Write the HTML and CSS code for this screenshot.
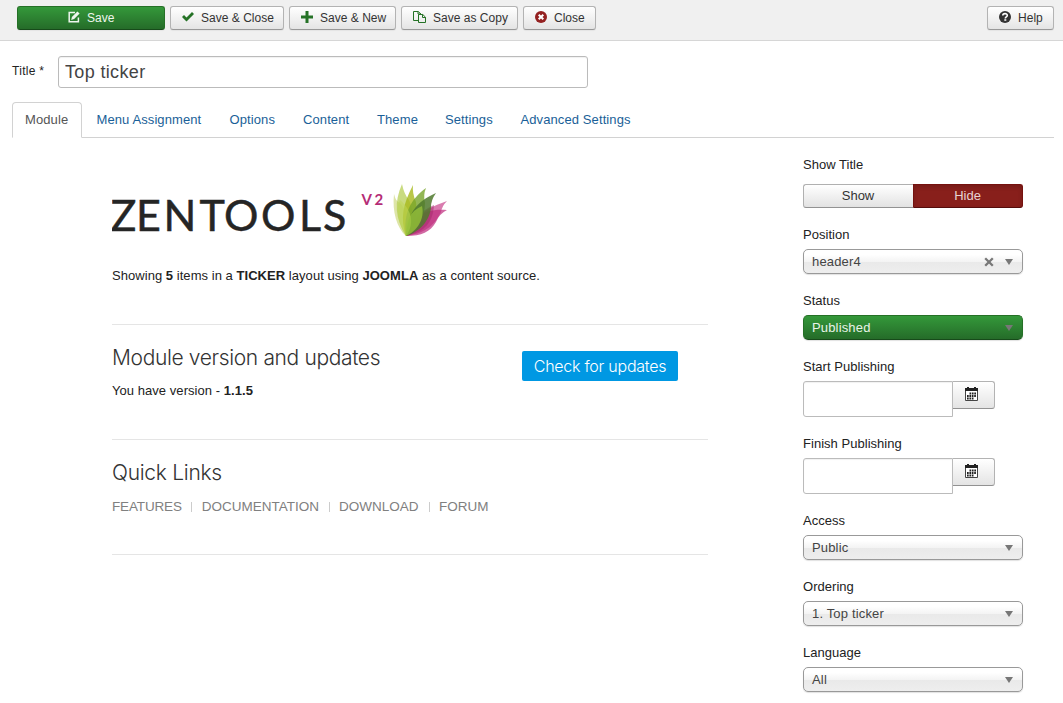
FILE: index.html
```html
<!DOCTYPE html>
<html lang="en">
<head>
<meta charset="utf-8">
<title>Module: Top ticker</title>
<link rel="stylesheet" href="styles.css">
</head>
<body>
<header class="toolbar">
  <button class="btn btn-save"><svg class="icon" viewBox="0 0 12 12"><path d="M7 1.6H1.2v9.2h9.2V6.4" fill="none" stroke="currentColor" stroke-width="1.5"/><path d="M3.2 8.9l.7-3L9.4.4l2.2 2.2-5.5 5.5z" fill="currentColor"/></svg><span>Save</span></button>
  <button class="btn btn-close-save"><svg class="icon green" viewBox="0 0 12 12"><path d="M0 6l2-2 2.5 2.5L10 1l2 2-7.5 7.6z" fill="currentColor"/></svg><span>Save &amp; Close</span></button>
  <button class="btn btn-new"><svg class="icon green" viewBox="0 0 12 12"><path d="M4.5 0h3v4.5H12v3H7.500V12h-3V7.500H0v-3h4.500z" fill="currentColor"/></svg><span>Save &amp; New</span></button>
  <button class="btn btn-copy"><svg class="icon copy-icon green" viewBox="0 0 13 12"><path d="M5 9.500H.5V.5h4.700L8 3M5 .5V3h3M5.500 3.500h4.300l2.700 2.700v5.300h-7zM9.500 3.500v3h3" fill="none" stroke="currentColor"/></svg><span>Save as Copy</span></button>
  <button class="btn btn-cancel"><svg class="icon red" viewBox="0 0 12 12"><circle cx="6" cy="6" r="6" fill="currentColor"/><path d="M3.700 3.700l4.600 4.600M8.300 3.700L3.700 8.300" stroke="#fff" stroke-width="2"/></svg><span>Close</span></button>
  <button class="btn btn-help"><svg class="icon" viewBox="0 0 12 12"><circle cx="6" cy="6" r="6" fill="currentColor"/><path d="M3.800 4.600C3.800 2 8.300 2.100 8.300 4.400c0 1.500-2 1.400-2 3M5.300 9h2" fill="none" stroke="#fff" stroke-width="1.600"/></svg><span>Help</span></button>
</header>

<div class="title-row">
  <label class="title-label" for="title">Title *</label>
  <input class="title-input" id="title" type="text" value="Top ticker">
</div>

<nav class="tabs">
  <a class="tab active">Module</a>
  <a class="tab tab-menu">Menu Assignment</a>
  <a class="tab tab-options">Options</a>
  <a class="tab tab-content">Content</a>
  <a class="tab tab-theme">Theme</a>
  <a class="tab tab-settings">Settings</a>
  <a class="tab tab-advanced">Advanced Settings</a>
</nav>

<div class="columns">
  <main class="main">
    <svg class="logo" viewBox="112 182 340 60" role="img" aria-label="Zentools V2">
      <text class="logo-name" y="230.500" x="110.500 136 163.500 199.500 224 261 299 323">ZENTOOLS</text>
      <text class="logo-version" y="205" x="361.500 374.500">V2</text>
      <g>
        <path d="M406 236C411 222 418 211 447 201Q442 206 441 212C435 224 427 233 406 236Z" fill="#cf5b9b" opacity=".8"/>
        <path d="M406 236C414 216 425 208 447 210Q439 214 436 222C430 232 422 236 406 236Z" fill="#bd2a7c" opacity=".7"/>
        <path d="M406 236C410 218 420 212 434 205C433 222 425 232 406 236Z" fill="#a52b6d" opacity=".55"/>
        <path d="M406 236C397 228 392 212 394 194Q396 202 400 203C410 215 412 226 406 236Z" fill="#d5df91" opacity=".8"/>
        <path d="M406 236C395 218 394 202 402 184Q404 194 409 200C415 213 413 226 406 236Z" fill="#b7cf55" opacity=".75"/>
        <path d="M406 236C400 218 403 204 413 185Q412 193 416 202C418 217 413 228 406 236Z" fill="#a8b91c" opacity=".8"/>
        <path d="M406 236C403 213 411 199 426 188Q423 195 425 203C425 218 416 230 406 236Z" fill="#78a52a" opacity=".8"/>
        <path d="M406 236C408 213 416 202 436 193Q431 200 431 207C430 220 420 232 406 236Z" fill="#4f792d" opacity=".85"/>
        <path d="M406 236C397 222 396 208 400 200C413 211 414 225 406 236Z" fill="#bdd557" opacity=".55"/>
        <path d="M406 236C405 222 410 211 422 206C425 219 417 231 406 236Z" fill="#9cc83a" opacity=".7"/>
      </g>
    </svg>
    <p class="summary">Showing <b>5</b> items in a <b>TICKER</b> layout using <b>JOOMLA</b> as a content source.</p>
    <section class="panel updates">
      <div>
        <h2 class="heading heading-version">Module version and updates</h2>
        <p class="version">You have version - <b>1.1.5</b></p>
      </div>
      <a class="check-button">Check for updates</a>
    </section>
    <section class="panel quick">
      <h2 class="heading heading-quick">Quick Links</h2>
      <div class="links"><a>FEATURES</a><a>DOCUMENTATION</a><a>DOWNLOAD</a><a>FORUM</a></div>
    </section>
  </main>

  <aside class="sidebar">
    <div class="field field-toggle">
      <span class="label">Show Title</span>
      <div class="toggle"><button class="toggle-option">Show</button><button class="toggle-option selected">Hide</button></div>
    </div>
    <div class="field"><span class="label">Position</span>
      <div class="select"><span>header4</span><svg class="clear" viewBox="0 0 10 10"><path d="M1.200 1.200l7.600 7.600M8.800 1.200L1.200 8.800" stroke="currentColor" stroke-width="2.300"/></svg><i class="arrow"></i></div></div>
    <div class="field"><span class="label">Status</span>
      <div class="select published"><span>Published</span><i class="arrow"></i></div></div>
    <div class="field"><span class="label">Start Publishing</span>
      <div class="date"><input class="date-input" type="text"><button class="date-button"><svg class="calendar" viewBox="0 0 13 14"><path d="M.5 2.500h12v11H.5z" fill="#fff" stroke="#444"/><path d="M0 1h2V0h2v1h5V0h2v1h2v3H0z" fill="#222"/><path d="M4.500 6.500h7M2 9h9.500M2 11.500h7" stroke="#222" stroke-width="1.800" stroke-dasharray="1.700 .7"/></svg></button></div></div>
    <div class="field"><span class="label">Finish Publishing</span>
      <div class="date"><input class="date-input" type="text"><button class="date-button"><svg class="calendar" viewBox="0 0 13 14"><path d="M.5 2.500h12v11H.5z" fill="#fff" stroke="#444"/><path d="M0 1h2V0h2v1h5V0h2v1h2v3H0z" fill="#222"/><path d="M4.500 6.500h7M2 9h9.500M2 11.500h7" stroke="#222" stroke-width="1.800" stroke-dasharray="1.700 .7"/></svg></button></div></div>
    <div class="field"><span class="label">Access</span>
      <div class="select"><span>Public</span><i class="arrow"></i></div></div>
    <div class="field"><span class="label">Ordering</span>
      <div class="select"><span>1. Top ticker</span><i class="arrow"></i></div></div>
    <div class="field"><span class="label">Language</span>
      <div class="select"><span>All</span><i class="arrow"></i></div></div>
  </aside>
</div>
</body>
</html>
```
FILE: styles.css
```css
* { box-sizing: border-box; }
body {
  margin: 0;
  height: 703px;
  overflow: hidden;
  background: #fff;
  color: #222;
  font: 13px/20px "Liberation Sans", Arial, sans-serif;
}
button, input { font-family: inherit; margin: 0; }
h2, p { margin: 0; }

.toolbar {
  display: flex;
  gap: 5px;
  height: 41px;
  padding: 6px 9px 0 17px;
  background: #f0f0f0;
  border-bottom: 1px solid #d6d6d6;
}
.btn {
  display: flex;
  align-items: center;
  height: 24px;
  padding: 0 0 1px 11px;
  border: 1px solid #b3b3b3;
  border-bottom-color: #989898;
  border-radius: 3px;
  background: linear-gradient(#fff, #e4e4e4);
  color: #333;
  font-size: 12px;
  letter-spacing: .02px;
  white-space: nowrap;
  box-shadow: 0 1px 1px rgba(0, 0, 0, .05);
}
.icon { width: 12px; height: 12px; margin: 0 7px 1px 0; flex: none; }
.copy-icon { width: 13px; }
.green { color: #257226; }
.red { color: #942121; }
.btn-save {
  width: 148px;
  padding-left: 50px;
  background: linear-gradient(#34983a, #256c29);
  border-color: #257026 #257026 #174b1a;
  color: #eef6ee;
}
.btn-close-save { width: 114px; }
.btn-new { width: 107px; }
.btn-copy { width: 117px; }
.btn-cancel { width: 73px; }
.btn-help { width: 67px; margin-left: auto; }

.title-row { display: flex; padding: 15px 12px 0; }
.title-label { width: 46px; padding-top: 5px; font-size: 12px; letter-spacing: .3px; }
.title-input {
  width: 530px;
  height: 32px;
  padding: 1px 6px 0;
  border: 1px solid #bbb;
  border-radius: 3px;
  color: #444;
  font-size: 18px;
  letter-spacing: .35px;
  box-shadow: inset 0 1px 1px rgba(0, 0, 0, .06);
}

.tabs {
  display: flex;
  height: 36px;
  margin: 14px 9px 0 12px;
  border-bottom: 1px solid #d2d2d2;
}
.tab { padding: 8px 13px 0; height: 35px; color: #1a5f98; white-space: nowrap; letter-spacing: .1px; }
.active {
  width: 70px;
  height: 36px;
  padding: 7px 0 0 12px;
  border: 1px solid #d2d2d2;
  border-bottom-color: #fff;
  border-radius: 4px 4px 0 0;
  color: #555;
}
.tab-menu { width: 133px; padding-left: 14.5px; }
.tab-options { width: 74px; padding-left: 14.5px; }
.tab-content { width: 75px; padding-left: 14px; }
.tab-theme { width: 67px; }
.tab-settings { width: 76px; padding-left: 14px; }
.tab-advanced { padding-left: 13.500px; }

.columns { display: flex; }
.main { width: 596px; margin: 44px 0 0 112px; }
.logo { display: block; width: 340px; height: 60px; }
.logo-name { font: 43px Lato, sans-serif; fill: #252525; stroke: #252525; stroke-width: .5px; }
.logo-version { font: bold 15px Lato, sans-serif; fill: #b52c76; }
.summary { height: 82px; padding-top: 24px; letter-spacing: .045px; }
.panel { height: 115px; border-top: 1px solid #e5e5e5; }
.updates { display: flex; justify-content: space-between; padding: 20px 30px 0 0; }
.heading { font: 300 21px/26px Inter, sans-serif; color: #333; white-space: nowrap; letter-spacing: -.36px; }
.heading-quick { letter-spacing: -.28px; }
.version { padding-top: 10px; letter-spacing: .05px; }
.check-button {
  width: 156px;
  height: 30px;
  margin-top: 6px;
  border-radius: 2px;
  background: #0098e3;
  color: #fff;
  font: 300 16px/30px Inter, sans-serif;
  letter-spacing: -.25px;
  text-align: center;
}
.quick { height: 116px; padding-top: 20px; border-bottom: 1px solid #e5e5e5; }
.links { display: flex; padding-top: 11px; color: #808080; font-size: 13.500px; }
.links a { margin-right: 9.500px; line-height: 20px; }
.links a:first-child { letter-spacing: -.15px; }
.links a + a { padding-left: 10.500px; background: linear-gradient(#ccc, #ccc) 0 5px / 1px 10px no-repeat; }
.links a:nth-child(3) { margin-right: 10px; }

.sidebar { width: 220px; margin: 17px 0 0 95px; }
.field { display: flex; flex-direction: column; gap: 4px; margin-bottom: 17px; }
.field-toggle { gap: 9px; }
.label { display: block; height: 20px; letter-spacing: .03px; }
.toggle { display: flex; }
.toggle-option {
  width: 110px;
  height: 24px;
  padding: 0 1px 1px 0;
  border: 1px solid #b0b0b0;
  border-right: 0;
  border-bottom-color: #929292;
  border-radius: 3px 0 0 3px;
  background: linear-gradient(#fff, #e2e2e2);
  color: #333;
  font-size: 13px;
}
.selected {
  border: 1px solid #75120f;
  border-bottom-color: #550c0b;
  border-radius: 0 3px 3px 0;
  background: #881f1b;
  color: #e7d3d3;
  box-shadow: inset 0 2px 4px rgba(0, 0, 0, .15);
}
.select {
  display: flex;
  align-items: center;
  height: 25px;
  padding: 0 9px 0 8px;
  border: 1px solid #999;
  border-radius: 5px;
  background: linear-gradient(#fff 20%, #f4f4f4 50%, #e9e9e9 52%, #eee);
  color: #444;
  letter-spacing: .16px;
  box-shadow: 0 1px 1px rgba(0, 0, 0, .12);
}
.published {
  border-color: #257026 #257026 #174b1a;
  background: linear-gradient(#34983a, #256c29);
  color: #e8f3e8;
}
.clear { width: 10px; height: 10px; margin-left: auto; margin-right: 11px; color: #777; }
.arrow { border: 4px solid transparent; border-top: 6px solid #777; border-bottom: 0; margin-left: auto; }
.clear + .arrow { margin-left: 0; }
.date { display: flex; align-items: flex-start; }
.date-input { width: 150px; height: 36px; border: 1px solid #bbb; border-radius: 3px 0 0 3px; box-shadow: inset 0 1px 1px rgba(0, 0, 0, .06); }
.date-button {
  display: flex;
  align-items: flex-start;
  width: 42px;
  height: 28px;
  padding: 5px 0 0 12px;
  border: 1px solid #b3b3b3;
  border-left: 0;
  border-bottom-color: #929292;
  border-radius: 0 3px 3px 0;
  background: linear-gradient(#fff, #e4e4e4);
}
.calendar { display: block; width: 13px; height: 14px; }
```
